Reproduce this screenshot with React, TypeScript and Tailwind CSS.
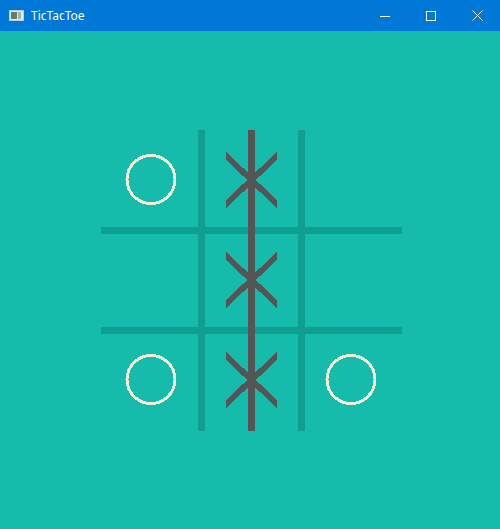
import React from "react";

type Mark = "X" | "O" | null;

const board: Mark[][] = [
  ["O", "X", null],
  [null, "X", null],
  ["O", "X", "O"],
];

const XMark = ({ cx, cy }: { cx: number; cy: number }) => {
  // flat, vertically cut strokes like the original canvas drawing
  const l = cx - 25.5;
  const r = cx + 25.5;
  const t = cy - 28;
  const b = cy + 28;
  return (
    <g fill="#555555">
      <polygon points={`${l},${t} ${r},${b - 8} ${r},${b} ${l},${t + 8}`} />
      <polygon points={`${l},${b - 8} ${r},${t} ${r},${t + 8} ${l},${b}`} />
    </g>
  );
};

const OMark = ({ cx, cy }: { cx: number; cy: number }) => (
  <circle cx={cx} cy={cy} r={24} fill="none" stroke="#f5eed4" strokeWidth={3} />
);

const TitleBar = () => (
  <div className="flex h-[31px] items-center bg-[#0078d7] text-white">
    <div className="ml-[9px] mr-[7px] flex h-[11px] w-[15px] border border-[#c8c8c8] bg-[#e8e8e8]">
      <div className="m-[1px] w-[6px] bg-[#5d7f6e]" />
      <div className="my-[1px] w-[3px] bg-[#9fb3a8]" />
    </div>
    <span className="text-[12px] font-['Noto_Sans',sans-serif]">TicTacToe</span>
    <div className="ml-auto flex h-full">
      <button className="flex w-[46px] items-center justify-center">
        <svg width="10" height="10" viewBox="0 0 10 10">
          <rect x="0" y="5" width="10" height="1" fill="white" />
        </svg>
      </button>
      <button className="flex w-[46px] items-center justify-center">
        <svg width="10" height="10" viewBox="0 0 10 10">
          <rect x="0.5" y="0.5" width="9" height="9" fill="none" stroke="white" />
        </svg>
      </button>
      <button className="flex w-[46px] items-center justify-center">
        <svg width="11" height="11" viewBox="0 0 11 11">
          <path d="M0.5 0.5 L10.5 10.5 M10.5 0.5 L0.5 10.5" stroke="white" strokeWidth="1" />
        </svg>
      </button>
    </div>
  </div>
);

export default function App() {
  return (
    <div className="flex h-[529px] w-[500px] flex-col bg-[#16bcab]">
      <TitleBar />
      <div className="flex-1 pl-[101px] pt-[99px]">
        <svg width="301" height="301" viewBox="0 0 301 301" shapeRendering="crispEdges">
          <g fill="#0f9e8f">
            <rect x="97" y="0" width="7" height="301" />
            <rect x="197" y="0" width="7" height="301" />
            <rect x="0" y="97" width="301" height="7" />
            <rect x="0" y="197" width="301" height="7" />
          </g>
          {board.map((row, r) =>
            row.map((m, c) => {
              const cx = c * 100 + 50.5;
              const cy = r * 100 + 50;
              if (m === "X") return <XMark key={`${r}-${c}`} cx={cx} cy={cy} />;
              if (m === "O") return <OMark key={`${r}-${c}`} cx={cx - 0.5} cy={cy - 0.5} />;
              return null;
            })
          )}
          <rect x="147" y="0" width="7" height="301" fill="#555555" />
        </svg>
      </div>
    </div>
  );
}
